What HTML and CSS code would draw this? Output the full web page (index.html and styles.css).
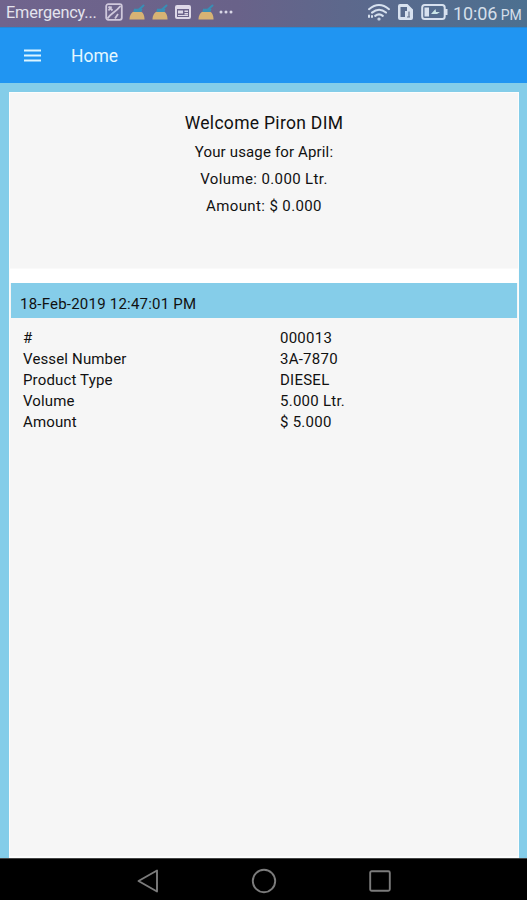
FILE: index.html
```html
<!DOCTYPE html>
<html lang="en">
<head>
<meta charset="utf-8">
<title>Home</title>
<link rel="stylesheet" href="styles.css">
</head>
<body>
<svg class="defs" width="0" height="0" aria-hidden="true">
  <symbol id="broom" viewBox="0 0 18 18">
    <path d="M1.500 16.500C1.500 12 4 8.500 7 8.500h5c3 0 4.500 4 4.500 8z" fill="#d6b374"/>
    <path d="M6 5.800h8.500L13.500 9h-8z" fill="#398eb5"/>
    <path d="M11 6.500L15.500 2.500" stroke="#398eb5" stroke-width="2" stroke-linecap="round"/>
  </symbol>
</svg>
<header class="status">
  <span class="carrier">Emergency...</span>
  <div class="notes">
    <svg width="18" height="18" viewBox="0 0 18 18" fill="none" stroke="#cfc8dc" stroke-width="1.800"><rect x="1.200" y="1.200" width="15.600" height="15.600" rx="2"/><path d="M2.500 15.500C6 10 10 10 15.500 3M3.500 3.500l4 4M3.500 7.500l3-4M10 15.500l3-4.500"/></svg>
    <svg width="18" height="18"><use href="#broom"/></svg>
    <svg width="18" height="18"><use href="#broom"/></svg>
    <svg width="18" height="18" viewBox="0 0 18 18"><path fill="#ddd8e8" fill-rule="evenodd" d="M3 2h12q2 0 2 2v10q0 2-2 2H3q-2 0-2-2V4q0-2 2-2zM3 6v8h12V6z"/><path d="M4 7.500h5v3H4zM10.500 7.500H14V9h-3.500zM10.500 10H14v1.500h-3.500zM4 12h10v1H4z" fill="#ddd8e8"/></svg>
    <svg width="18" height="18"><use href="#broom"/></svg>
    <svg class="more" width="14" height="18" viewBox="0 0 14 18" fill="#d9d7e6"><circle cx="2" cy="9" r="1.500"/><circle cx="7" cy="9" r="1.500"/><circle cx="12" cy="9" r="1.500"/></svg>
  </div>
  <div class="system">
    <svg width="24" height="18" viewBox="0 0 24 18" fill="none" stroke="#d7e1ef" stroke-width="2" stroke-linecap="round"><path d="M2 6.200Q12-2.200 22 6.200M5 9.600q7.200-5.600 14 0M8.200 12.900q3.900-3 7.600 0"/><circle cx="12" cy="16" r=".6"/><path d="M2 12.500v1.500M5 13v1" stroke-width="2"/></svg>
    <svg class="sim" width="17" height="18" viewBox="0 0 17 18"><path fill="#d7e1ef" fill-rule="evenodd" d="M3 1h7.500l5.500 5.500V15q0 2-2 2H3q-2 0-2-2V3q0-2 2-2zM3.500 4v10H8V8h2V4z"/><path d="M12 8.500v6M10 14h3" stroke="#65738e" stroke-width="1.200" fill="none"/></svg>
    <svg class="battery" width="27" height="18" viewBox="0 0 27 18"><rect x="1.200" y="2" width="22.500" height="14" rx="2.500" fill="none" stroke="#d7e1ef" stroke-width="2"/><path d="M3.500 4.500H8v9H3.500zM24 6h2.500v6H24z" fill="#d7e1ef"/><path d="M10 11l4.500-5 .5 3h4l-3 2z" fill="#c9e5e7"/></svg>
    <span class="clock">10:06 <small>PM</small></span>
  </div>
</header>
<nav class="appbar">
  <svg width="17" height="13" viewBox="0 0 17 13" stroke="#dcf5ff" stroke-width="1.800"><path d="M0 1.500h17M0 6.500h17M0 11.500h17"/></svg>
  <h1>Home</h1>
</nav>
<main class="page">
  <section class="summary">
    <h2>Welcome Piron DIM</h2>
    <p>Your usage for April:</p>
    <p class="figure">Volume: 0.000 Ltr.</p>
    <p class="figure">Amount: $ 0.000</p>
  </section>
  <section class="record">
    <h3>18-Feb-2019 12:47:01 PM</h3>
    <dl>
      <dt>#</dt><dd>000013</dd>
      <dt>Vessel Number</dt><dd>3A-7870</dd>
      <dt>Product Type</dt><dd>DIESEL</dd>
      <dt>Volume</dt><dd>5.000 Ltr.</dd>
      <dt>Amount</dt><dd>$ 5.000</dd>
    </dl>
  </section>
</main>
<footer class="navbar">
  <svg width="22" height="24" viewBox="0 0 22 24"><path d="M20 1.500v21L1.500 12z"/></svg>
  <svg width="26" height="26" viewBox="0 0 26 26"><circle cx="13" cy="13" r="11.200"/></svg>
  <svg width="22" height="22" viewBox="0 0 22 22"><rect x="1.200" y="1.200" width="19.600" height="19.600" rx="1.500"/></svg>
</footer>
</body>
</html>
```
FILE: styles.css
```css
* { box-sizing: border-box; }
body {
  margin: 0;
  height: 900px;
  display: flex;
  flex-direction: column;
  overflow: hidden;
  font-family: Roboto, "Liberation Sans", sans-serif;
  font-size: 15px;
  letter-spacing: .15px;
  color: #111;
  background: #84cde9;
}
.defs { position: absolute; }
h1, h2, h3, p, dl, dd { margin: 0; font-weight: 400; }
svg { display: block; flex: none; }
.status {
  height: 27px;
  flex: none;
  display: flex;
  justify-content: space-between;
  padding: 0 5px 0 6px;
  background: linear-gradient(90deg, #70648d, #696289 45%, #5d688c 65%, #4c7090);
  color: #e4e3ee;
  white-space: nowrap;
  letter-spacing: 0;
}
.carrier { width: 99px; font-size: 16.3px; letter-spacing: -.15px; line-height: 26px; }
.notes { display: flex; gap: 5px; padding-top: 3px; margin-right: auto; }
.more { margin-left: -1px; }
.system { display: flex; padding-top: 3px; }
.sim { margin-left: 6px; }
.battery { margin-left: 7px; }
.clock { margin-left: 5px; width: 69px; font-size: 18px; letter-spacing: -.1px; line-height: 22px; color: #d5dfea; }
.clock small { font-size: 14px; margin-left: -1px; }
.appbar {
  height: 56px;
  flex: none;
  display: flex;
  align-items: center;
  gap: 30px;
  padding-left: 24px;
  background: #2095f2;
  border-top: 1px solid #2788d4;
  color: #e4f7ff;
}
.appbar h1 { font-size: 17.5px; letter-spacing: 0; line-height: 24px; }
.page { flex: 1; margin: 9px 8px 0 9px; display: flex; flex-direction: column; background: #f6f6f6; border: solid #fcfdfd; border-width: 1px 1px 2px; }
.summary { height: 176px; padding-top: 17px; text-align: center; border-bottom: 1px solid #fafafa; }
.summary h2 { font-size: 17.5px; letter-spacing: .3px; line-height: 26px; margin-bottom: 3px; }
.summary p { line-height: 27px; }
.summary .figure { letter-spacing: .38px; }
.record { border-top: 14px solid #fff; }
.record h3 { height: 35px; margin: 0 1px; padding: 1px 9px 0; line-height: 40px; font-size: 15px; letter-spacing: .22px; background: #85cde9; }
dl { display: grid; grid-template-columns: 257px 1fr; padding: 10px 0 0 13px; line-height: 21px; }
dd { letter-spacing: .25px; }
.navbar { height: 42px; flex: none; display: flex; align-items: center; background: #000; padding: 3px 0 0 137px; border-top: 1px solid #444; }
.navbar svg { fill: none; stroke: #7b7b7b; stroke-width: 1.9; stroke-linejoin: round; }
.navbar svg:nth-child(2) { margin-left: 92px; }
.navbar svg:nth-child(3) { margin-left: 92px; }
```
